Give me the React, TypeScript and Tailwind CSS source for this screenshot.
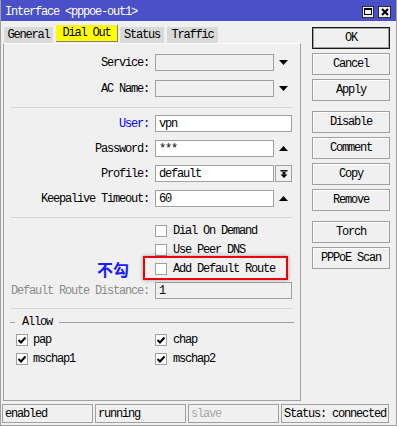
import React from "react";

const Down = () => (
  <div className="w-[18px] flex justify-center">
    <svg width="9" height="5" viewBox="0 0 9 5"><polygon points="0,0 9,0 4.5,5" fill="#000" /></svg>
  </div>
);
const Up = () => (
  <div className="w-[18px] flex justify-center">
    <svg width="9" height="5" viewBox="0 0 9 5"><polygon points="0,5 9,5 4.5,0" fill="#000" /></svg>
  </div>
);

const Input = ({ value = "", w, white = true }: { value?: string; w: string; white?: boolean }) => (
  <div className={`${w} h-[17px] border border-[#a0a0a0] ${white ? "bg-white" : "bg-[#f0f0f0]"} pl-[3px] flex items-center text-black`}>
    {value}
  </div>
);

const Row = ({ label, lc = "text-black", children, mt }: { label: string; lc?: string; children: React.ReactNode; mt: string }) => (
  <div className={`flex items-center h-[17px] ${mt}`}>
    <div className={`w-[145px] text-right ${lc}`}>{label}</div>
    <div className="ml-[6px] flex items-center">{children}</div>
  </div>
);

const Box = ({ checked }: { checked?: boolean }) => (
  <div className="w-[12px] h-[12px] border border-[#a0a0a0] bg-white flex items-center justify-center shrink-0">
    {checked && (
      <svg width="10" height="10" viewBox="0 0 10 10">
        <polyline points="1.5,5 4,7.5 8.5,2.5" fill="none" stroke="#000" strokeWidth="2" />
      </svg>
    )}
  </div>
);

const Sep = ({ mt }: { mt: string }) => <div className={`${mt} ml-[7px] w-[281px] h-px bg-[#d6d6d6]`} />;

const Btn = ({ t, def }: { t: string; def?: boolean }) => (
  <div
    className={`h-[22px] w-[78px] flex items-center justify-center bg-[#f0f0f0] ${
      def ? "border border-[#1a1a1a] shadow-[inset_0_0_0_1px_#a0a0a0]" : "border border-[#a0a0a0] shadow-[inset_1px_1px_0_#ffffff]"
    }`}
  >
    {t}
  </div>
);

export default function App() {
  return (
    <div className="w-[397px] h-[426px] bg-[#f0f0f0] border-l border-r border-b border-[#a0a0a0] flex flex-col font-['Liberation_Mono',monospace] text-[12px] tracking-[-1.2px] leading-none text-black overflow-hidden">
      {/* title bar */}
      <div className="h-[21px] bg-[#4a50c8] flex items-center pl-[4px] pr-[5px] pt-[2px] shrink-0">
        <div className="text-white flex-1">Interface &lt;pppoe-out1&gt;</div>
        <div className="flex gap-[4px] items-center">
          <div className="w-[12px] h-[12px] bg-[#f0f0f0] border border-[#303030] flex items-center justify-center">
            <div className="w-[8px] h-[7px] border border-black border-t-2" />
          </div>
          <div className="w-[13px] h-[12px] bg-[#f0f0f0] border border-[#303030] flex items-center justify-center">
            <svg width="8" height="8" viewBox="0 0 8 8">
              <path d="M1 1L7 7M7 1L1 7" stroke="#000" strokeWidth="2" />
            </svg>
          </div>
        </div>
      </div>

      {/* body */}
      <div className="h-[380px] flex shrink-0">
        <div className="ml-[2px] w-[298px] flex flex-col pt-[4px]">
          {/* tabs */}
          <div className="h-[18px] flex items-start pl-[1px]">
            <div className="mt-[2px] h-[16px] w-[49px] bg-[#d9d9d9] flex items-center justify-center">General</div>
            <div className="ml-[3px] h-[17px] w-[62px] bg-[#ffff00] border-r border-b border-[#808080] flex items-center justify-center">Dial Out</div>
            <div className="ml-[2px] mt-[2px] h-[16px] w-[44px] bg-[#d9d9d9] flex items-center justify-center">Status</div>
            <div className="ml-[3px] mt-[2px] h-[16px] w-[51px] bg-[#d9d9d9] flex items-center justify-center">Traffic</div>
          </div>
          {/* panel */}
          <div className="flex-1 border-t border-t-white border-l border-r border-b border-[#a0a0a0] flex flex-col">
            <Row label="Service:" mt="mt-[10px]">
              <Input w="w-[119px]" white={false} />
              <Down />
            </Row>
            <Row label="AC Name:" mt="mt-[9px]">
              <Input w="w-[119px]" white={false} />
              <Down />
            </Row>
            <Sep mt="mt-[10px]" />
            <Row label="User:" lc="text-[#0000ff]" mt="mt-[7px]">
              <Input w="w-[137px]" value="vpn" />
            </Row>
            <Row label="Password:" mt="mt-[8px]">
              <Input w="w-[119px]" value="***" />
              <Up />
            </Row>
            <Row label="Profile:" mt="mt-[8px]">
              <Input w="w-[119px]" value="default" />
              <div className="ml-[1px] w-[17px] h-[17px] border border-[#a0a0a0] bg-[#f0f0f0] flex items-center justify-center">
                <svg width="8" height="8" viewBox="0 0 8 8">
                  <rect x="0.5" y="0" width="7" height="1.5" fill="#000" />
                  <rect x="2.5" y="2" width="3" height="2.5" fill="#000" />
                  <polygon points="0.5,4.5 7.5,4.5 4,8" fill="#000" />
                </svg>
              </div>
            </Row>
            <Row label="Keepalive Timeout:" mt="mt-[8px]">
              <Input w="w-[119px]" value="60" />
              <Up />
            </Row>
            <Sep mt="mt-[10px]" />
            <div className="mt-[7px] h-[12px] flex items-center pl-[151px]">
              <Box />
              <span className="ml-[6px]">Dial On Demand</span>
            </div>
            <div className="mt-[7px] h-[12px] flex items-center pl-[151px]">
              <Box />
              <span className="ml-[6px]">Use Peer DNS</span>
            </div>
            <div className="mt-[7px] h-[12px] flex items-center relative">
              <div className="w-[144px] pr-[19px] text-right text-[16px] font-bold tracking-normal text-[#1a1aff] font-['Noto_Sans_CJK_SC',sans-serif]">
                不勾
              </div>
              <div className="ml-[7px] flex items-center">
                <Box />
                <span className="ml-[6px]">Add Default Route</span>
              </div>
              <div className="absolute left-[139px] top-[-7px] w-[145px] h-[24px] border-2 border-[#e8000a] shadow-[0_0_4px_rgba(0,0,0,0.35)]" />
            </div>
            <Row label="Default Route Distance:" lc="text-[#8c8c8c]" mt="mt-[7px]">
              <Input w="w-[137px]" value="1" white={false} />
            </Row>
            <Sep mt="mt-[9px]" />
            <div className="mt-[7px] h-[12px] flex items-center pl-[6px] pr-[6px]">
              <div className="w-[5px] h-px bg-[#a0a0a0]" />
              <span className="ml-[7px]">Allow</span>
              <div className="ml-[7px] flex-1 h-px bg-[#a0a0a0]" />
            </div>
            <div className="mt-[6px] h-[12px] flex items-center pl-[12px]">
              <div className="w-[139px] flex items-center">
                <Box checked />
                <span className="ml-[5px]">pap</span>
              </div>
              <Box checked />
              <span className="ml-[6px]">chap</span>
            </div>
            <div className="mt-[7px] h-[12px] flex items-center pl-[12px]">
              <div className="w-[139px] flex items-center">
                <Box checked />
                <span className="ml-[5px]">mschap1</span>
              </div>
              <Box checked />
              <span className="ml-[6px]">mschap2</span>
            </div>
          </div>
        </div>

        {/* right buttons */}
        <div className="ml-[11px] pt-[6px] flex flex-col">
          <div className="flex flex-col gap-[4px]">
            <Btn t="OK" def />
            <Btn t="Cancel" />
            <Btn t="Apply" />
          </div>
          <div className="mt-[10px] flex flex-col gap-[4px]">
            <Btn t="Disable" />
            <Btn t="Comment" />
            <Btn t="Copy" />
            <Btn t="Remove" />
          </div>
          <div className="mt-[10px] flex flex-col gap-[4px]">
            <Btn t="Torch" />
            <Btn t="PPPoE Scan" />
          </div>
        </div>
      </div>

      {/* status bar */}
      <div className="h-[24px] pt-[3px] pl-[1px] flex gap-[2px] shrink-0">
        <div className="w-[91px] h-[19px] border border-[#a0a0a0] flex items-center pl-[2px]">enabled</div>
        <div className="w-[91px] h-[19px] border border-[#a0a0a0] flex items-center pl-[2px]">running</div>
        <div className="w-[91px] h-[19px] border border-[#a0a0a0] flex items-center pl-[2px] text-[#a8a8a8]">slave</div>
        <div className="w-[108px] h-[19px] border border-[#a0a0a0] flex items-center pl-[2px]">Status: connected</div>
      </div>
    </div>
  );
}
